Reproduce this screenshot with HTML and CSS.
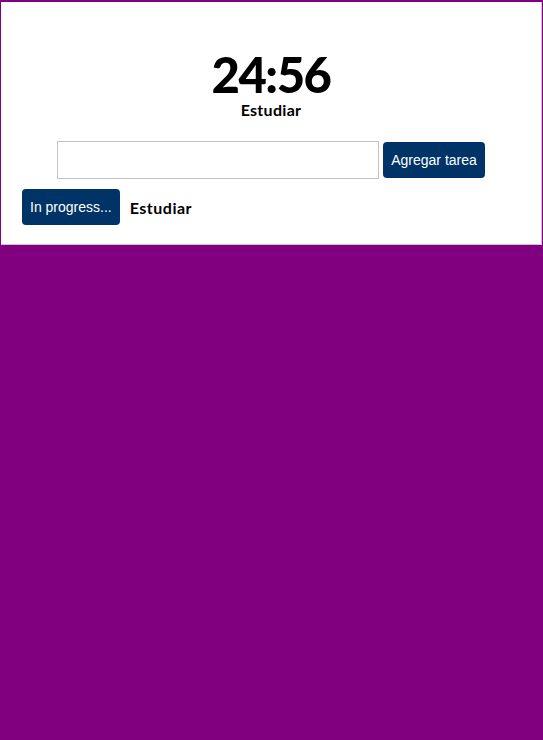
FILE: index.html
```html
<!DOCTYPE html>
<html lang="es">
<head>
<meta charset="utf-8">
<link rel="stylesheet" href="styles.css">
</head>
<body>
<div class="app">
  <div class="timer">24:56</div>
  <div class="current">Estudiar</div>
  <form class="add">
    <input class="task-input" type="text">
    <button class="btn" type="button">Agregar tarea</button>
  </form>
  <ul class="tasks">
    <li class="task"><button class="btn" type="button">In progress...</button><span class="task-name">Estudiar</span></li>
  </ul>
</div>
</body>
</html>
```

FILE: styles.css
```css
html, body { margin: 0; padding: 0; }
body {
  background: #800080;
  height: 740px;
  font-family: "Lato", "Open Sans", sans-serif;
}
.app {
  box-sizing: border-box;
  margin: 2px 1px 0 1px;
  width: 541px;
  height: 243px;
  background: #fff;
  border-right: 1px solid #c8c8c8;
  border-bottom: 1px solid #c8c8c8;
  padding-top: 46px;
}
.timer {
  text-align: center;
  font-size: 49px;
  font-weight: 900;
  line-height: 52px;
  color: #000;
  letter-spacing: -1.5px;
}
.current {
  text-align: center;
  font-size: 16px;
  font-weight: 700;
  line-height: 20px;
  letter-spacing: 0.3px;
  margin-top: 0;
}
.add {
  display: flex;
  justify-content: center;
  align-items: center;
  gap: 4px;
  margin: 21px 0 0 0;
}
.task-input {
  box-sizing: border-box;
  width: 322px;
  height: 38px;
  border: 1px solid #c4c4c4;
  margin: 0;
  padding: 0 6px;
}
.btn {
  box-sizing: border-box;
  height: 36px;
  padding: 0 8px;
  border: none;
  border-radius: 4px;
  background: #003366;
  color: #fff;
  font-family: "Liberation Sans", Arial, sans-serif;
  font-size: 14px;
  margin: 0;
}
.tasks {
  list-style: none;
  margin: 10px 0 0 0;
  padding: 0 0 0 21px;
}
.task {
  display: flex;
  align-items: center;
  gap: 10px;
}
.task-name {
  font-size: 16px;
  font-weight: 700;
  letter-spacing: 0.5px;
}
```
